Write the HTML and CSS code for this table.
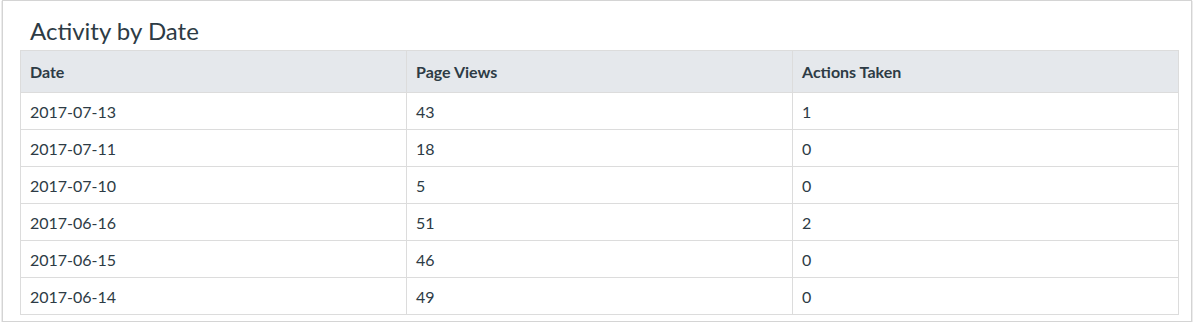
FILE: index.html
```html
<!DOCTYPE html>
<html lang="en">
<head>
<meta charset="utf-8">
<title>Activity by Date</title>
<link rel="stylesheet" href="styles.css">
</head>
<body>
<section class="panel">
  <h2 class="panel-title">Activity by Date</h2>
  <div class="table-clip">
    <table class="activity-table">
      <thead>
        <tr><th>Date</th><th>Page Views</th><th>Actions Taken</th></tr>
      </thead>
      <tbody>
        <tr><td>2017-07-13</td><td>43</td><td>1</td></tr>
        <tr><td>2017-07-11</td><td>18</td><td>0</td></tr>
        <tr><td>2017-07-10</td><td>5</td><td>0</td></tr>
        <tr><td>2017-06-16</td><td>51</td><td>2</td></tr>
        <tr><td>2017-06-15</td><td>46</td><td>0</td></tr>
        <tr><td>2017-06-14</td><td>49</td><td>0</td></tr>
      </tbody>
    </table>
  </div>
</section>
</body>
</html>
```
FILE: styles.css
```css
html, body {
  margin: 0;
  padding: 0;
  background: #ffffff;
}

body {
  font-family: Lato, "Open Sans", "Liberation Sans", sans-serif;
  color: #2d3b45;
}

.panel {
  box-sizing: border-box;
  width: 1190px;
  margin-left: 2px;
  border: 1px solid #d4d4d4;
  padding: 16px 12px 4px 17px;
  box-shadow: 0 1px 1px rgba(0, 0, 0, 0.45);
  background: #ffffff;
}

.panel-title {
  margin: 0 0 5px 10px;
  font-size: 24px;
  line-height: 28px;
  font-weight: 400;
  color: #2d3b45;
}

.table-clip {
  height: 267px;
  overflow: hidden;
}

.activity-table {
  width: 1159px;
  table-layout: fixed;
  border-collapse: collapse;
  font-size: 16px;
}

.activity-table th,
.activity-table td {
  border: 1px solid #dcdcdc;
  padding: 0 9px;
  text-align: left;
  vertical-align: middle;
}

.activity-table th {
  height: 41px;
  background: #e5e8ec;
  font-weight: 700;
}

.activity-table td {
  height: 36px;
  font-weight: 400;
}
```
